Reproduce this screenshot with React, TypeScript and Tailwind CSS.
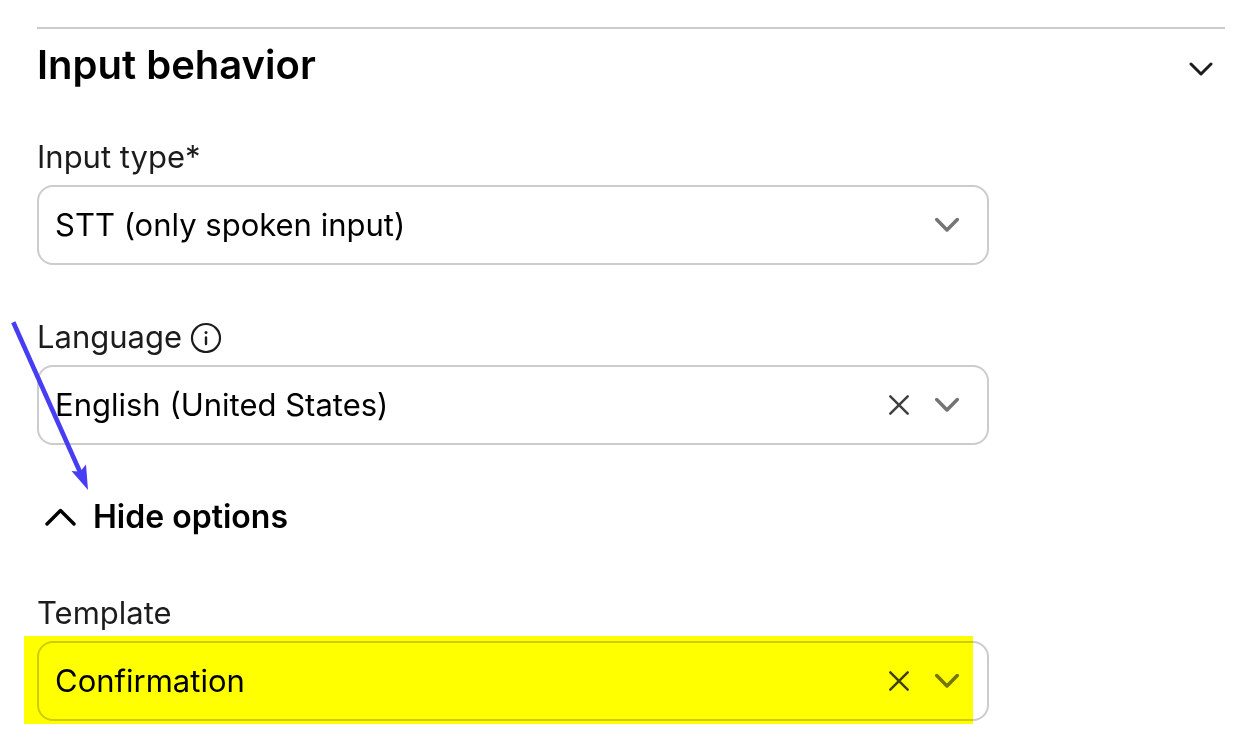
import React, { useState } from "react";

type SelectFieldProps = {
  id: string;
  label: string;
  options: string[];
  clearable?: boolean;
  info?: boolean;
  highlighted?: boolean;
};

function InfoIcon() {
  return (
    <svg className="h-8 w-8" viewBox="0 0 32 32" fill="none" aria-hidden="true">
      <circle cx="16" cy="17" r="14" stroke="#1c1c1c" strokeWidth="2.2" />
      <path d="M16 16.5v6.5" stroke="#1c1c1c" strokeWidth="2.4" strokeLinecap="round" />
      <circle cx="16" cy="11.5" r="1.5" fill="#1c1c1c" />
    </svg>
  );
}

function SelectField({ id, label, options, clearable, info, highlighted }: SelectFieldProps) {
  const [value, setValue] = useState(options[0]);

  return (
    <div className="flex max-w-[952px] flex-col gap-2">
      <div className="flex items-center gap-2 text-[#1c1c1c]">
        <label htmlFor={id}>{label}</label>
        {info && (
          <button type="button" aria-label="More information">
            <InfoIcon />
          </button>
        )}
      </div>
      <div className="relative">
        <select
          id={id}
          value={value}
          onChange={(e) => setValue(e.target.value)}
          className="h-20 w-full appearance-none rounded-2xl border-2 border-[#cccccc] bg-white pr-28 pl-4 text-black"
        >
          {!value && <option value="" />}
          {options.map((option) => (
            <option key={option}>{option}</option>
          ))}
        </select>
        <div className="pointer-events-none absolute inset-y-0 right-7 flex items-center gap-[22px]">
          {clearable && (
            <button type="button" aria-label={`Clear ${label}`} className="pointer-events-auto" onClick={() => setValue("")}>
              <svg className="h-6 w-6" viewBox="0 0 24 24" fill="none" stroke="#404040" strokeWidth="2.5" strokeLinecap="round">
                <path d="M3.3 3.3l17.4 17.4M20.7 3.3L3.3 20.7" />
              </svg>
            </button>
          )}
          <svg className="h-7 w-7" viewBox="0 0 28 28" fill="none" stroke="#757575" strokeWidth="3.6" strokeLinecap="round" strokeLinejoin="round">
            <path d="M3.7 8.6L14 18.9L24.3 8.6" />
          </svg>
        </div>
        {highlighted && (
          <div className="pointer-events-none absolute -top-[5px] right-4 -bottom-[3px] -left-[13px] bg-[#ffff00] mix-blend-multiply" />
        )}
      </div>
    </div>
  );
}

export default function App() {
  const [open, setOpen] = useState(true);
  const [showOptions, setShowOptions] = useState(true);

  return (
    <main className="relative min-h-screen bg-white pt-[27px] pr-[21px] pb-8 pl-[37px] font-['Inter',sans-serif] text-[31px] leading-10">
      <section className="border-t-2 border-[#cccccc] pt-3">
        <h2 className="text-[40px] leading-[48px] font-semibold text-black">
          <button type="button" className="flex w-full items-center justify-between pr-3" onClick={() => setOpen(!open)}>
            Input behavior
            <svg className="h-6 w-6" viewBox="0 0 24 24" fill="none" stroke="#1c1c1c" strokeWidth="3" strokeLinecap="round" strokeLinejoin="round">
              <path d="M2 11L12 21L22 11" />
            </svg>
          </button>
        </h2>

        {open && (
          <div className="mt-12 flex flex-col gap-[52px]">
            <SelectField id="input-type" label="Input type*" options={["STT (only spoken input)"]} />
            <SelectField id="language" label="Language" options={["English (United States)"]} clearable info />
            <button
              type="button"
              className="flex items-center gap-4 self-start pl-2 text-[32px] font-semibold text-black"
              onClick={() => setShowOptions(!showOptions)}
            >
              <svg className="h-8 w-8" viewBox="0 0 32 32" fill="none" stroke="#000000" strokeWidth="3.4" strokeLinecap="round" strokeLinejoin="round">
                <path d="M2 23L15.5 9.5L29 23" />
              </svg>
              Hide options
            </button>
            {showOptions && (
              <div className="pt-1">
                <SelectField id="template" label="Template" options={["Confirmation"]} clearable highlighted />
              </div>
            )}
          </div>
        )}
      </section>

      {/* callout arrow pointing at the options toggle */}
      <svg className="pointer-events-none absolute top-80 left-2 h-[172px] w-[84px]" viewBox="0 0 84 172" aria-hidden="true">
        <path d="M5.3 2.3L72 152" stroke="#473df2" strokeWidth="4.6" />
        <path d="M80 170L63.5 151L70.5 151.5L73.5 150L78 144.5Z" fill="#473df2" />
      </svg>
    </main>
  );
}
